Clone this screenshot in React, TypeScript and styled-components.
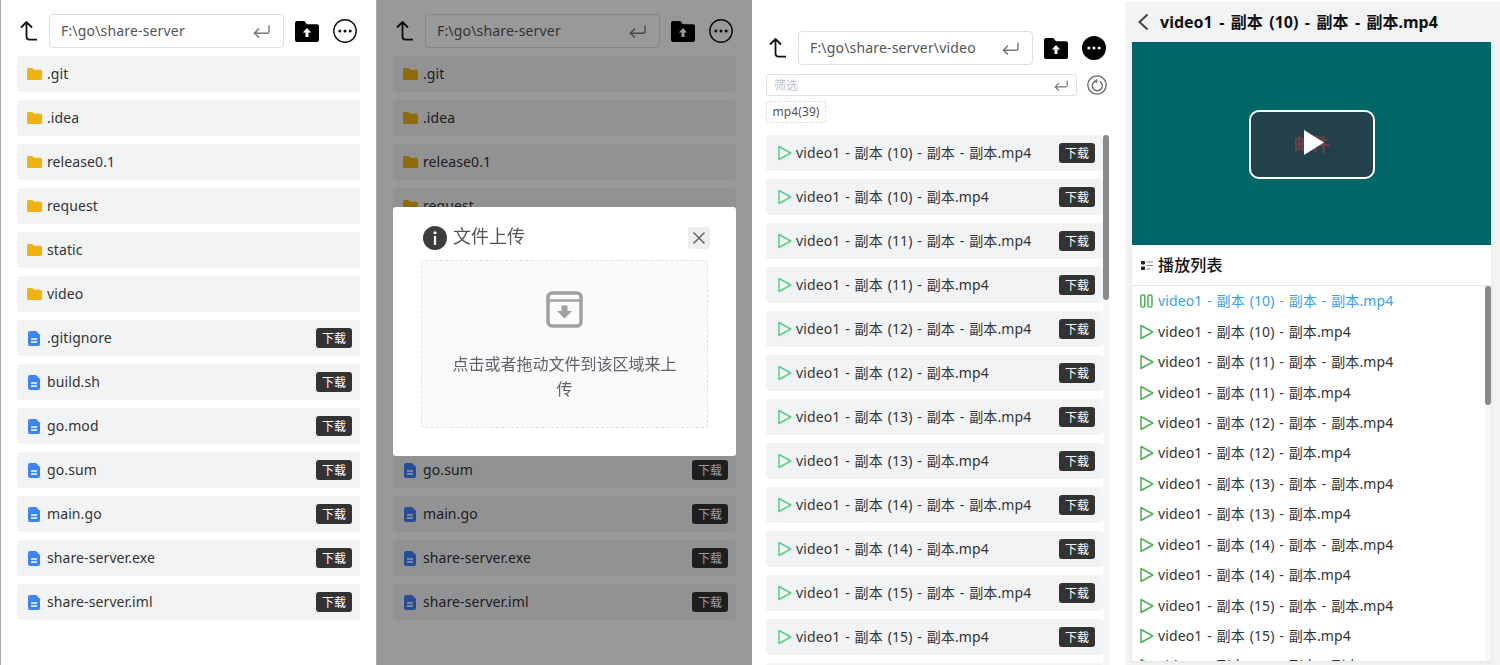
import React from "react";
import styled, { createGlobalStyle } from "styled-components";

const GlobalStyle = createGlobalStyle`
  html, body {
    margin: 0;
    height: 100%;
    overflow: hidden;
    background: #fff;
  }
  body {
    font-family: "Noto Sans", "Noto Sans CJK SC", sans-serif;
    font-size: 14px;
    color: #333;
  }
  * {
    box-sizing: border-box;
  }
`;

const Page = styled.div`
  display: grid;
  grid-template-columns: 376px 376px 372px 376px;
  width: 1500px;
  height: 665px;
  overflow: hidden;
`;

const Phone = styled.section`
  position: relative;
  border-left: 1px solid #aaa;
  padding: 14px 16px 0;
  height: 665px;
  overflow: hidden;
`;

const Overlay = styled.div`
  position: absolute;
  inset: 0;
  background: rgba(0, 0, 0, 0.4);
  display: flex;
  align-items: center;
  justify-content: center;
  padding-bottom: 2px;
`;

const Toolbar = styled.div`
  display: flex;
  align-items: center;
  height: 34px;
  padding-left: 3px;
`;

const BackButton = styled.svg`
  width: 17px;
  height: 20px;
  margin-right: 12px;
  flex: none;
`;

const PathBox = styled.div`
  flex: none;
  width: 235px;
  height: 34px;
  border: 1px solid #dcdfe6;
  border-radius: 4px;
  display: flex;
  align-items: center;
  justify-content: space-between;
  padding: 0 13px 0 11px;
  color: #555;
`;

const PathText = styled.span`
  padding-bottom: 2px;
  letter-spacing: 0.17px;
`;

const EnterIcon = styled.svg<{ $size?: number }>`
  width: ${(p) => p.$size ?? 17}px;
  height: ${(p) => Math.round((p.$size ?? 17) * 0.76)}px;
  flex: none;
`;

const UploadIcon = styled.svg`
  width: 24px;
  height: 21px;
  margin-left: 11px;
  flex: none;
`;

const MoreIcon = styled.svg`
  width: 24px;
  height: 24px;
  margin-left: 14px;
  flex: none;
`;

const FileList = styled.div`
  margin-top: 8px;
  display: flex;
  flex-direction: column;
  gap: 8px;
`;

const Row = styled.div`
  flex: none;
  height: 36px;
  background: #f2f3f5;
  border-radius: 4px;
  display: flex;
  align-items: center;
  justify-content: space-between;
  padding: 0 8px 0 10px;
`;

const VideoRow = styled(Row)`
  padding-left: 12px;
`;

const RowName = styled.div`
  display: flex;
  align-items: center;
  color: #333;
  white-space: nowrap;
`;

const Label = styled.span<{ $video?: boolean }>`
  padding-bottom: 2px;
  letter-spacing: 0.1px;
  word-spacing: ${(p) => (p.$video ? "1.1px" : "0")};
`;

const FolderIcon = styled.svg`
  width: 15px;
  height: 12px;
  margin-right: 5px;
  flex: none;
`;

const DocIcon = styled.svg`
  width: 12px;
  height: 15px;
  margin: 0 7px 0 1px;
  flex: none;
`;

const PlayIcon = styled.svg<{ $dark?: boolean }>`
  width: 14px;
  height: 16px;
  margin-right: 4px;
  flex: none;
  color: ${(p) => (p.$dark ? "#4caf50" : "#55d187")};
`;

const DownloadTag = styled.span`
  flex: none;
  width: 36px;
  height: 20px;
  background: #333;
  border-radius: 3px;
  color: #fff;
  font-size: 12px;
  line-height: 21px;
  text-align: center;
`;

const Modal = styled.div`
  width: 343px;
  height: 249px;
  background: #fff;
  border-radius: 3px;
  padding: 19px 28px 0;
  filter: blur(0.4px);
`;

const ModalHeader = styled.div`
  display: flex;
  align-items: center;
  height: 24px;
  margin: 0 -2px 0 2px;
`;

const InfoIcon = styled.svg`
  width: 24px;
  height: 24px;
  margin-right: 6px;
  flex: none;
`;

const ModalTitle = styled.span`
  font-size: 18px;
  color: #555;
  flex: 1;
  padding-bottom: 6px;
`;

const CloseButton = styled.div`
  width: 22px;
  height: 22px;
  background: #eee;
  border-radius: 3px;
  display: flex;
  align-items: center;
  justify-content: center;
`;

const DropZone = styled.div`
  margin-top: 10px;
  height: 168px;
  background: #f9fafc;
  border: 1px dashed #dcdfe6;
  border-radius: 4px;
  padding: 30px 26px 0;
  display: flex;
  flex-direction: column;
  align-items: center;
`;

const ArchiveIcon = styled.svg`
  width: 37px;
  height: 37px;
  flex: none;
`;

const DropText = styled.p`
  margin: 24px 0 0;
  font-size: 16px;
  line-height: 25px;
  color: #606266;
  text-align: center;
`;

const VideoPhone = styled.section`
  height: 665px;
  padding: 31px 0 0 14px;
  overflow: hidden;
  display: flex;
  flex-direction: column;
`;

const VideoToolbar = styled(Toolbar)`
  flex: none;
  padding-left: 0;
  margin-left: 3px;
`;

const FilterRow = styled.div`
  flex: none;
  display: flex;
  align-items: center;
  margin-top: 9px;
  height: 22px;
`;

const FilterBox = styled.div`
  width: 311px;
  height: 22px;
  border: 1px solid #dcdfe6;
  border-radius: 3px;
  display: flex;
  align-items: center;
  justify-content: space-between;
  padding: 0 8px 0 7px;
  font-size: 12px;
  color: #c0c4cc;
`;

const RefreshIcon = styled.svg`
  width: 20px;
  height: 20px;
  margin-left: 10px;
  flex: none;
`;

const ExtTag = styled.div`
  flex: none;
  align-self: flex-start;
  margin-top: 5px;
  height: 22px;
  width: 60px;
  border: 1px dashed #dcdfe6;
  border-radius: 3px;
  font-size: 12px;
  line-height: 19px;
  letter-spacing: 0.1px;
  text-align: center;
  color: #555;
`;

const ScrollArea = styled.div`
  position: relative;
  flex: 1;
  min-height: 0;
  overflow: hidden;
`;

const VideoScrollArea = styled(ScrollArea)`
  margin-top: 12px;
  width: 343px;
  display: flex;
  flex-direction: column;
  gap: 8px;
  padding-right: 6px;
`;

const ScrollTrack = styled.div`
  position: absolute;
  top: 0;
  right: 0;
  bottom: 0;
  width: 6px;
  background: #f7f7f7;
`;

const ScrollThumb = styled.div<{ $height: number }>`
  height: ${(p) => p.$height}px;
  background: #8a8a8a;
  border-radius: 3px;
`;

const PlayerPhone = styled.section`
  height: 663px;
  margin: 2px 0 0 1px;
  background: #f2f3f5;
  padding: 0 9px 4px 7px;
  display: flex;
  flex-direction: column;
  overflow: hidden;
`;

const PlayerHeader = styled.div`
  flex: none;
  height: 40px;
  display: flex;
  align-items: center;
  padding-left: 5px;
  font-size: 16px;
  font-weight: 700;
  color: #111;
`;

const PlayerTitle = styled.span`
  padding-bottom: 2px;
  word-spacing: 2.3px;
`;

const ChevronIcon = styled.svg`
  width: 12px;
  height: 18px;
  margin-right: 11px;
  flex: none;
`;

const VideoFrame = styled.div`
  flex: none;
  height: 203px;
  background: #006769;
  display: flex;
  align-items: center;
  justify-content: center;
`;

const BigPlay = styled.div`
  position: relative;
  width: 126px;
  height: 69px;
  border: 2px solid #fff;
  border-radius: 10px;
  background: #22414b;
  display: flex;
  align-items: center;
  justify-content: center;
  margin-top: 1px;
`;

const VideoCaption = styled.span`
  font-size: 18px;
  font-weight: 700;
  color: #6b4249;
  padding-bottom: 3px;
`;

const BigTriangle = styled.svg`
  position: absolute;
  left: 53px;
  top: 18px;
  width: 20px;
  height: 25px;
`;

const PlaylistCard = styled.div`
  flex: 1;
  min-height: 0;
  background: #fff;
  box-shadow: 0 1px 3px rgba(0, 0, 0, 0.08);
  display: flex;
  flex-direction: column;
`;

const PlaylistTitle = styled.div`
  flex: none;
  height: 41px;
  border-bottom: 1px solid #e5e6e8;
  display: flex;
  align-items: center;
  padding-left: 9px;
  font-size: 16px;
  font-weight: 500;
  color: #111;
`;

const ListIcon = styled.svg`
  width: 12px;
  height: 9px;
  margin-right: 5px;
  flex: none;
`;

const PlaylistItem = styled.div<{ $active?: boolean }>`
  height: 30.45px;
  display: flex;
  align-items: center;
  padding-left: 8px;
  white-space: nowrap;
  color: ${(p) => (p.$active ? "#3a9ff0" : "#333")};
`;

const Back = () => (
  <BackButton viewBox="0 0 17 20" fill="none" stroke="#111" strokeWidth="1.8">
    <path d="M1 6.500 6.500 1 12 6.500M6.500 1v14.500a3.200 3.200 0 0 0 3.200 3.200H17" />
  </BackButton>
);

const Enter = ({ size, color = "#777" }: { size?: number; color?: string }) => (
  <EnterIcon $size={size} viewBox="0 0 17 13" fill="none" stroke={color} strokeWidth="1.4">
    <path d="M16 .5v5.700a2 2 0 0 1-2 2H1.500M6 3.600 1.400 8.200 6 12.600" />
  </EnterIcon>
);

const Upload = () => (
  <UploadIcon viewBox="0 0 24 21">
    <path
      fill="#000"
      d="M2 0h7.200l2.800 3.200h10a2 2 0 0 1 2 2V19a2 2 0 0 1-2 2H2a2 2 0 0 1-2-2V2a2 2 0 0 1 2-2z"
    />
    <path fill="#fff" d="M12 7l4.200 4.600h-2.700V16h-3v-4.400H7.800z" />
  </UploadIcon>
);

const More = ({ filled }: { filled?: boolean }) => (
  <MoreIcon viewBox="0 0 24 24">
    <circle
      cx="12"
      cy="12"
      r={filled ? 12 : 11.2}
      fill={filled ? "#000" : "none"}
      stroke={filled ? "none" : "#111"}
      strokeWidth="1.4"
    />
    {[6.8, 12, 17.2].map((cx) => (
      <circle key={cx} cx={cx} cy="12" r="1.5" fill={filled ? "#fff" : "#111"} />
    ))}
  </MoreIcon>
);

const Folder = () => (
  <FolderIcon viewBox="0 0 15 12">
    <path
      fill="#f0b20c"
      d="M1.500 0h4l1.600 1.700h6.400A1.500 1.500 0 0 1 15 3.200v7.300a1.500 1.500 0 0 1-1.500 1.500h-12A1.500 1.500 0 0 1 0 10.500v-9A1.500 1.500 0 0 1 1.500 0z"
    />
  </FolderIcon>
);

const Doc = () => (
  <DocIcon viewBox="0 0 12 15">
    <path fill="#3f83f8" d="M2 0h6l4 4v9a2 2 0 0 1-2 2H2a2 2 0 0 1-2-2V2a2 2 0 0 1 2-2z" />
    <path stroke="#fff" strokeWidth="1.3" d="M3 8h6M3 11h6" />
  </DocIcon>
);

const Play = ({ dark }: { dark?: boolean }) => (
  <PlayIcon
    $dark={dark}
    viewBox="0 0 14 16"
    fill="none"
    stroke="currentColor"
    strokeWidth="1.5"
    strokeLinejoin="round"
  >
    <path d="M1 1.500v13L12.800 8z" />
  </PlayIcon>
);

const Pause = () => (
  <PlayIcon $dark viewBox="0 0 14 16" fill="none" stroke="currentColor" strokeWidth="1.5">
    <rect x="0.8" y="2" width="4" height="12" rx="1.6" />
    <rect x="8" y="2" width="4" height="12" rx="1.6" />
  </PlayIcon>
);

type FileItem = { name: string; folder?: boolean };

const files: FileItem[] = [
  { name: ".git", folder: true },
  { name: ".idea", folder: true },
  { name: "release0.1", folder: true },
  { name: "request", folder: true },
  { name: "static", folder: true },
  { name: "video", folder: true },
  { name: ".gitignore" },
  { name: "build.sh" },
  { name: "go.mod" },
  { name: "go.sum" },
  { name: "main.go" },
  { name: "share-server.exe" },
  { name: "share-server.iml" },
];

const videos: string[] = [];
for (let i = 10; videos.length < 39; i++) {
  videos.push(`video1 - 副本 (${i}) - 副本 - 副本.mp4`);
  if (videos.length < 39) videos.push(`video1 - 副本 (${i}) - 副本.mp4`);
}

const Files = () => (
  <FileList>
    {files.map((file) => (
      <Row key={file.name}>
        <RowName>
          {file.folder ? <Folder /> : <Doc />}
          <Label>{file.name}</Label>
        </RowName>
        {!file.folder && <DownloadTag>下载</DownloadTag>}
      </Row>
    ))}
  </FileList>
);

const PathBar = () => (
  <Toolbar>
    <Back />
    <PathBox>
      <PathText>F:\go\share-server</PathText>
      <Enter />
    </PathBox>
    <Upload />
    <More />
  </Toolbar>
);

const App = () => (
  <Page>
    <GlobalStyle />
    <Phone>
      <PathBar />
      <Files />
    </Phone>

    <Phone>
      <PathBar />
      <Files />
      <Overlay>
        <Modal>
          <ModalHeader>
            <InfoIcon viewBox="0 0 24 24">
              <circle cx="12" cy="12" r="12" fill="#3d3d3d" />
              <circle cx="12" cy="6.800" r="1.500" fill="#fff" />
              <rect x="10.900" y="10" width="2.200" height="9" fill="#fff" />
            </InfoIcon>
            <ModalTitle>文件上传</ModalTitle>
            <CloseButton>
              <svg width="14" height="14" viewBox="0 0 14 14" stroke="#666" strokeWidth="1.5">
                <path d="M1.500 1.500l11 11M12.500 1.500l-11 11" />
              </svg>
            </CloseButton>
          </ModalHeader>
          <DropZone>
            <ArchiveIcon viewBox="0 0 37 37">
              <rect x="2" y="2" width="33" height="33" rx="4" fill="none" stroke="#a0a0a0" strokeWidth="3.5" />
              <path d="M2 9.500h33" stroke="#a0a0a0" strokeWidth="2.5" />
              <path fill="#a0a0a0" d="M15.500 14.500h6V20h4.500l-7.500 7.500L11 20h4.500z" />
            </ArchiveIcon>
            <DropText>点击或者拖动文件到该区域来上传</DropText>
          </DropZone>
        </Modal>
      </Overlay>
    </Phone>

    <VideoPhone>
      <VideoToolbar>
        <Back />
        <PathBox>
          <PathText>F:\go\share-server\video</PathText>
          <Enter />
        </PathBox>
        <Upload />
        <More filled />
      </VideoToolbar>
      <FilterRow>
        <FilterBox>
          筛选
          <Enter size={14} />
        </FilterBox>
        <RefreshIcon viewBox="0 0 20 20" fill="none" stroke="#666" strokeWidth="1.3">
          <circle cx="10" cy="10" r="9.200" />
          <path d="M12.800 6.400a5 5 0 1 1-4.600-.2" />
          <path fill="#666" stroke="none" d="M10.200 3.800v4.600l-3-2.300z" />
        </RefreshIcon>
      </FilterRow>
      <ExtTag>mp4(39)</ExtTag>
      <VideoScrollArea>
        {videos.map((name, i) => (
          <VideoRow key={i}>
            <RowName>
              <Play />
              <Label $video>{name}</Label>
            </RowName>
            <DownloadTag>下载</DownloadTag>
          </VideoRow>
        ))}
        <ScrollTrack>
          <ScrollThumb $height={165} />
        </ScrollTrack>
      </VideoScrollArea>
    </VideoPhone>

    <PlayerPhone>
      <PlayerHeader>
        <ChevronIcon viewBox="0 0 12 18" fill="none" stroke="#444" strokeWidth="2">
          <path d="M10.500 1.500 2.500 9l8 7.500" />
        </ChevronIcon>
        <PlayerTitle>{videos[0]}</PlayerTitle>
      </PlayerHeader>
      <VideoFrame>
        <BigPlay>
          <VideoCaption>邮件</VideoCaption>
          <BigTriangle viewBox="0 0 20 25">
            <path fill="#fff" d="M0 0v25l20-12.500z" />
          </BigTriangle>
        </BigPlay>
      </VideoFrame>
      <PlaylistCard>
        <PlaylistTitle>
          <ListIcon viewBox="0 0 12 9">
            <rect width="4" height="3.500" rx="0.800" fill="#222" />
            <rect y="5.500" width="4" height="3.500" rx="0.800" fill="#222" />
            <path d="M5.500 1h6.500M5.500 4.500h6.500M5.500 8h4" stroke="#888" strokeWidth="1.100" />
          </ListIcon>
          <PathText>播放列表</PathText>
        </PlaylistTitle>
        <ScrollArea>
          {videos.map((name, i) => (
            <PlaylistItem key={i} $active={i === 0}>
              {i === 0 ? <Pause /> : <Play dark />}
              <Label $video>{name}</Label>
            </PlaylistItem>
          ))}
          <ScrollTrack>
            <ScrollThumb $height={119} />
          </ScrollTrack>
        </ScrollArea>
      </PlaylistCard>
    </PlayerPhone>
  </Page>
);

export default App;
